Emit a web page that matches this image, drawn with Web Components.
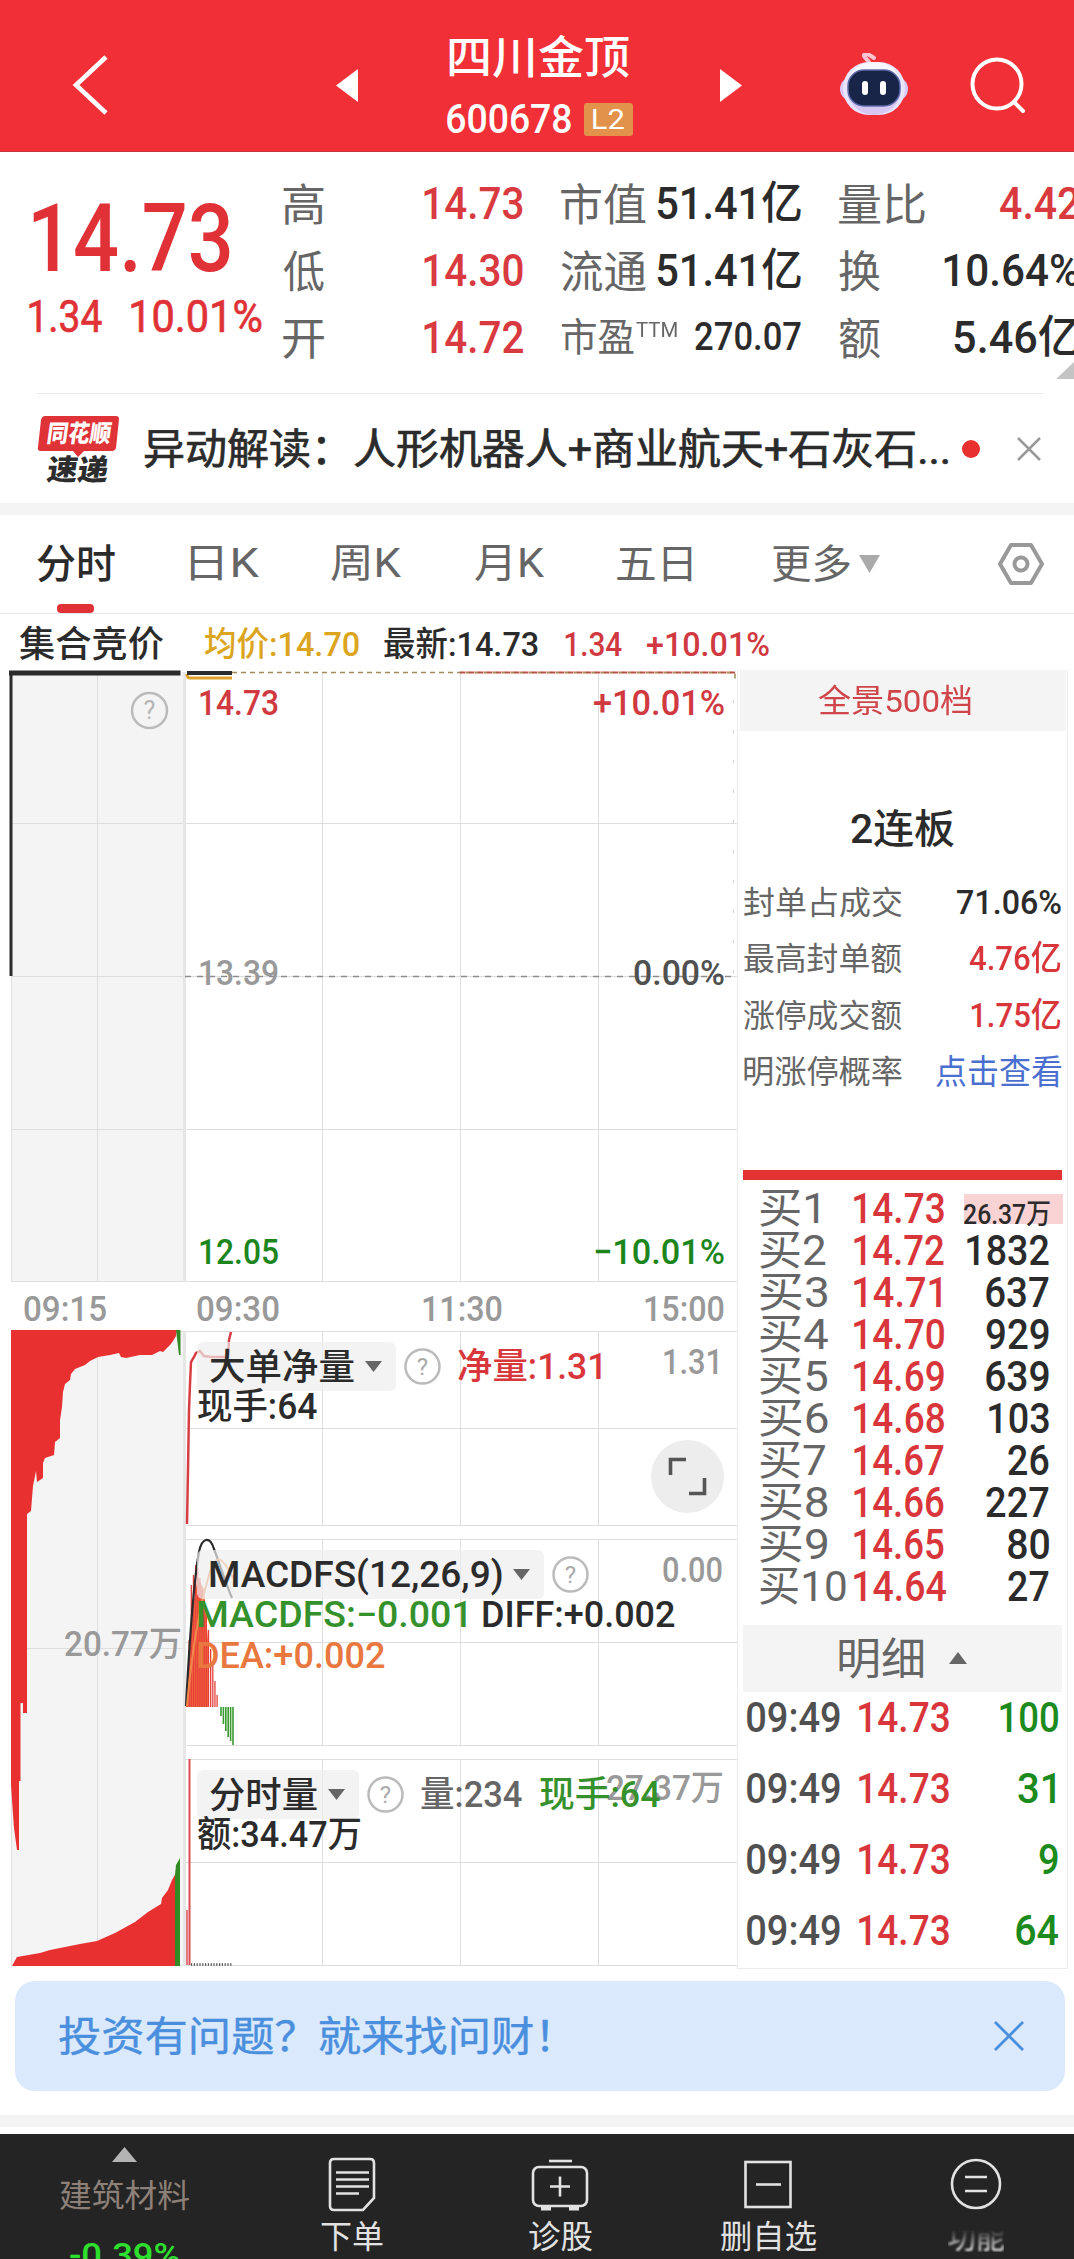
<!DOCTYPE html>
<html lang="zh-CN">
<head>
<meta charset="utf-8">
<title>四川金顶 600678</title>
<style>
  html, body { margin: 0; padding: 0; }
  body {
    width: 1074px;
    height: 2259px;
    overflow: hidden;
    background: #fff;
    color: #2b2b2b;
    font-family: Roboto, "Noto Sans CJK SC", sans-serif;
    font-weight: 500;
  }
</style>
</head>
<body>
<stock-page></stock-page>

<script>
/**
 * Single line of text squeezed to a given width.
 * Usage: <fit-text w="120" s="36">14.73</fit-text>
 */
class FitText extends HTMLElement {
    constructor() {
        super();
        this.attachShadow({ mode: 'open' });
    }

    connectedCallback() {
        const size = Number(this.getAttribute('s'));
        const width = Number(this.getAttribute('w'));
        this.shadowRoot.innerHTML = `
      <style>
        :host { display: block; flex: none; width: ${width}px; height: ${size}px; font-size: ${size}px; line-height: ${size}px; }
        span { display: inline-block; white-space: nowrap; transform-origin: 0 50%; }
      </style>
      <span><slot></slot></span>
    `;
        const cs = getComputedStyle(this);
        const ctx = FitText.ctx;
        ctx.font = `${cs.fontWeight} ${size}px ${cs.fontFamily}`;
        const m = ctx.measureText(this.textContent);
        const scale = width / (m.actualBoundingBoxLeft + m.actualBoundingBoxRight);
        // Han glyphs sit a little higher than the digits
        const drop = /[0-9A-Z]/.test(this.textContent) ? 0 : size * 0.035;
        this.shadowRoot.querySelector('span').style.transform =
            `translate(${m.actualBoundingBoxLeft * scale}px, ${drop}px) scaleX(${scale})`;
    }
}
FitText.ctx = document.createElement('canvas').getContext('2d');
customElements.define('fit-text', FitText);

// Shorthand for the static parts of the page
function define(name, css, html) {
    customElements.define(name, class extends HTMLElement {
        constructor() {
            super();
            this.attachShadow({ mode: 'open' });
        }

        connectedCallback() {
            this.shadowRoot.innerHTML = `<style>:host { display: block; box-sizing: border-box; } svg { display: block; flex: none; } ${css}</style>${html}`;
        }
    });
}

const t = (text, w, s, cls = '') => `<fit-text class="${cls}" w="${w}" s="${s}">${text}</fit-text>`;

/* ---------- header ---------- */
define('stock-header', `
  :host { height: 152px; padding-top: 18px; background: #f12f37; color: #fff; border-bottom: 1px solid #c9343c; }
  .bar { display: flex; align-items: center; height: 134px; }
  .title { width: 186px; height: 102px; margin: 0 88px 0 89px; }
  .title > fit-text { margin-left: 2px; }
  .code { display: flex; align-items: center; height: 33px; margin-top: 24px; }
  .badge { display: flex; align-items: center; justify-content: center; width: 49px; height: 33px; margin-left: 13px; border-radius: 3px; background: #e2924a; font-weight: 400; }
`, `
  <div class="bar">
    <svg width="36" height="60" style="margin-left:72px" fill="none" stroke="#fff" stroke-width="4.6"><path d="M34 2 4 30l30 28"/></svg>
    <svg width="22" height="33" style="margin-left:228px" fill="#fff"><path d="M22 0v33L0 16.500z"/></svg>
    <div class="title">
      ${t('四川金顶', 180, 45)}
      <div class="code">${t('600678', 124, 40)}<span class="badge">${t('L2', 31, 28)}</span></div>
    </div>
    <svg width="22" height="33" style="margin-left:-1px" fill="#fff"><path d="M0 0v33l22-16.500z"/></svg>
    <svg width="70" height="64" viewBox="0 0 70 64" style="margin-left:97px">
      <path d="M31 11C28 5 24 4 25 2c2-3 7 1 10 3" fill="none" stroke="#ffc4d2" stroke-width="4" stroke-linecap="round"/>
      <rect x="1" y="24" width="68" height="24" rx="12" fill="#d9c9fb"/>
      <rect x="4" y="9" width="62" height="53" rx="26" fill="#e9e4ff"/>
      <path d="M8 42c6 14 16 20 27 20s22-6 27-20z" fill="#d6c8f3"/>
      <path d="M10 24c4-10 14-15 25-15s21 5 25 15z" fill="#f8f6ff"/>
      <rect x="9" y="17" width="52" height="36" rx="16" fill="#182548" stroke="#5c68a8" stroke-width="1.500"/>
      <rect x="23" y="28" width="6" height="14" rx="3" fill="#fff"/>
      <rect x="41" y="28" width="6" height="14" rx="3" fill="#fff"/>
    </svg>
    <svg width="58" height="58" style="margin-left:60px" fill="none" stroke="#fff" stroke-width="4" stroke-linecap="round"><circle cx="28" cy="28" r="24.500"/><path d="m45 46 9 9"/></svg>
  </div>
`);

/* ---------- price and key figures ---------- */
const stat = (label, lw, value, vw, cls, s = 45) =>
    `<div class="row">${t(label, lw, 44, 'label')}${t(value, vw, s, cls)}</div>`;

define('quote-summary', `
  :host { position: relative; height: 242px; overflow: hidden; }
  .wrap { display: grid; grid-template-columns: 283px 240px 240px 240px; }
  .price { padding-top: 40px; color: #e03236; }
  .price > fit-text { margin-left: 33px; }
  .change { display: flex; gap: 29px; margin: 8px 0 0 29px; font-weight: 400; -webkit-text-stroke: .7px; }
  .wrap { grid-template-columns: 283px 240px 278px 278px; }
  .col { padding-top: 18px; }
  .col + .col { padding-left: 38px; }
  .row { display: flex; align-items: center; justify-content: space-between; height: 67px; }
  .label { color: #666; font-weight: 400; }
  .pe { display: flex; align-items: center; }
  .pe fit-text + fit-text { margin: -14px 0 0 2px; }
  .red { color: #d93a40; }
  .line { height: 1px; margin: 22px 31px 0 37px; background: #ebebeb; }
  .corner { position: absolute; right: 0; bottom: 15px; }
`, `
  <div class="wrap">
    <div class="price">
      ${t('14.73', 197, 94)}
      <div class="change">${t('1.34', 73, 45)}${t('10.01%', 130, 45)}</div>
    </div>
    <div class="col">
      ${stat('高', 41, '14.73', 99, 'red')}
      ${stat('低', 41, '14.30', 99, 'red')}
      ${stat('开', 41, '14.72', 99, 'red')}
    </div>
    <div class="col">
      ${stat('市值', 85, '51.41亿', 144, '')}
      ${stat('流通', 85, '51.41亿', 144, '')}
      <div class="row"><span class="pe">${t('市盈', 73, 39, 'label')}${t('TTM', 41, 21, 'label')}</span>${t('270.07', 106, 39)}</div>
    </div>
    <div class="col">
      ${stat('量比', 86, '4.42', 79, 'red')}
      ${stat('换', 41, '10.64%', 135, '')}
      ${stat('额', 41, '5.46亿', 125, '')}
    </div>
  </div>
  <div class="line"></div>
  <svg class="corner" width="18" height="17" fill="#c4c4c4"><path d="M18 0v17H0z"/></svg>
`);

/* ---------- news strip ---------- */
define('news-strip', `
  :host { display: flex; align-items: center; height: 109px; }
  svg.logo { margin: 0 26px 0 37px; }
  .text { display: flex; font-weight: 400; -webkit-text-stroke: .7px; }
  .dot { width: 18px; height: 18px; margin: 0 46px 0 14px; border-radius: 50%; background: #e8302e; }
`, `
  <svg class="logo" width="82" height="68" viewBox="0 0 82 68" font-family="'Noto Sans CJK SC'" font-weight="900">
    <path d="M8 1h71q3 0 3 3l-3 29q-1 3-4 3H47l-6 6-5-6H4q-4 0-3-4L4 5q1-4 4-4z" fill="#e03338"/>
    <text transform="translate(9 27) skewX(-8)" font-size="24" textLength="64" lengthAdjust="spacingAndGlyphs" fill="#fff">同花顺</text>
    <text transform="translate(9 65) skewX(-8)" font-size="29" textLength="61" lengthAdjust="spacingAndGlyphs" fill="#2d2d2d">速递</text>
  </svg>
  <span class="text">${t('异动解读：', 180, 42)}<span style="width:29px"></span>${t('人形机器人+商业航天+石灰石...', 594, 42)}</span>
  <span class="dot"></span>
  <svg style="margin-left:-9px" width="24" height="24" stroke="#999" stroke-width="2.500"><path d="m1 1 22 22M23 1 1 23"/></svg>
`);

/* ---------- period tabs ---------- */
define('period-tabs', `
  :host { position: relative; display: flex; align-items: center; height: 111px; border-top: 12px solid #f4f4f4; border-bottom: 1px solid #e6e6e6; color: #666; font-weight: 400; padding-left: 37px; }
  .on { color: #2b2b2b; font-weight: 500; }
  .mark { position: absolute; left: 57px; bottom: 0; width: 37px; height: 9px; border-radius: 4px; background: #e03236; }
`, `
  ${t('分时', 78, 40, 'on')}
  <span style="width:76px"></span>${t('日K', 69, 40)}
  <span style="width:71px"></span>${t('周K', 71, 40)}
  <span style="width:73px"></span>${t('月K', 70, 40)}
  <span style="width:72px"></span>${t('五日', 75, 40)}
  <span style="width:80px"></span>${t('更多', 78, 40)}
  <svg style="margin-left:9px" width="21" height="18" fill="#aaa"><path d="M0 0h21L10.500 18z"/></svg>
  <svg style="margin-left:118px" width="46" height="44" fill="none" stroke="#999" stroke-width="4" stroke-linejoin="round"><path d="M13 3h20l11 19-11 19H13L2 22z"/><circle cx="23" cy="22" r="6.500"/></svg>
  <span class="mark"></span>
`);

define('price-line', `
  :host { display: flex; align-items: center; height: 56px; padding: 4px 0 0 19px; box-sizing: border-box; }
  .gold { color: #dba520; }
  .red { color: #d0393f; }
`, `
  ${t('集合竞价', 145, 36)}
  <span style="width:41px"></span>${t('均价:14.70', 154, 34, 'gold')}
  <span style="width:25px"></span>${t('最新:14.73', 154, 34)}
  <span style="width:27px"></span>${t('1.34', 57, 34, 'red')}
  <span style="width:25px"></span>${t('+10.01%', 122, 34, 'red')}
`);

/* ---------- charts ---------- */
const help = (x = 0) => `<svg width="37" height="37" style="margin-left:${x}px"><circle cx="18.500" cy="18.500" r="17" fill="none" stroke="#bbb" stroke-width="2.500"/><text x="18.500" y="27" font-size="24" font-weight="400" text-anchor="middle" fill="#aaa">?</text></svg>`;

function hist() {
    // top edge of the MACD histogram, one value for each minute
    const tops = [1690, 1640, 1585, 1575, 1565, 1568, 1578, 1590, 1600, 1614, 1630, 1649, 1665, 1681, 1695];
    const lows = [1716, 1724, 1731, 1737, 1741, 1745];
    let out = '';
    tops.forEach((y, i) => {
        out += `<path d="M${187 + i * 2.15} 1707V${y}" stroke="#e5403c" stroke-width="1.300"/>`;
    });
    lows.forEach((y, i) => {
        out += `<path d="M${221 + i * 2.4} 1707V${y}" stroke="#3a9a30" stroke-width="1.600"/>`;
    });
    return out;
}

function grid() {
    let d = '';
    [823.5, 976.5, 1129.5, 1281.5].forEach(y => { d += `M11 ${y}H737`; });
    [1331.5, 1428.5, 1525.5, 1539.5, 1642.5, 1745.5, 1759.5, 1862.5, 1965.5].forEach(y => { d += `M185 ${y}H737`; });
    d += 'M11 1331.500H185M11 1648.500H185M11 1965.500H185';
    [[672, 1282], [1331, 1526], [1539, 1746], [1759, 1966]].forEach(([a, b]) => {
        [322.5, 460.5, 598.5].forEach(x => { d += `M${x} ${a}V${b}`; });
    });
    d += 'M97.500 672V1282M97.500 1331V1966M11.500 976V1282M11.500 1780V1966';
    return d;
}

const axis = (x, y, text, len, color, anchor = 'start') =>
    `<text x="${x}" y="${y}" textLength="${len}" lengthAdjust="spacingAndGlyphs" text-anchor="${anchor}" fill="${color}">${text}</text>`;

define('trend-chart', `
  :host { display: grid; width: 737px; height: 1299px; }
  :host > * { grid-area: 1 / 1; }
  .legends { padding: 672px 0 0 197px; }
`, `
  <svg width="737" height="1299" viewBox="0 670 737 1299" font-size="35.500">
    <path d="M11 672h172v610H11zM11 1331h172v635H11z" fill="#f4f4f4"/>
    <path d="${grid()}" stroke="#dedede" fill="none"/>
    <path d="M184.500 672V1282M184.500 1331V1966" stroke="#e6e6e6" stroke-width="3"/>
    <path d="M460 672.500H735" stroke="#f6b4ae" stroke-width="2.500"/>
    <path d="M232 672.500H735V680" stroke="#a08c58" stroke-width="1.500" stroke-dasharray="5 4" fill="none"/>
    <path d="M460 672.500H735" stroke="#b4514c" stroke-width="1.500" stroke-dasharray="5 4"/>
    <path d="M733.500 700V975" stroke="#d2d2d2" stroke-dasharray="3 27"/>
    <path d="M185 976.500H737" stroke="#8c8c8c" stroke-width="1.600" stroke-dasharray="6 6"/>
    <path d="M9 673H180.500" stroke="#2b2b2b" stroke-width="5"/>
    <path d="M11 672V976" stroke="#2b2b2b" stroke-width="3"/>
    <path d="M232 678H190q-3 0-3-4" stroke="#dfa32c" stroke-width="3" fill="none"/>
    <path d="M187 673H232" stroke="#2b2b2b" stroke-width="4"/>
    <circle cx="149.500" cy="710.500" r="17.500" fill="none" stroke="#bbb" stroke-width="2.500"/>
    <text x="149.500" y="719" font-size="25" font-weight="400" text-anchor="middle" fill="#b5b5b5">?</text>

    ${axis(198, 715, '14.73', 81, '#d0393f')}
    ${axis(198, 985, '13.39', 81, '#999')}
    ${axis(198, 1264, '12.05', 81, '#1c861c')}
    ${axis(725, 715, '+10.01%', 132, '#d0393f', 'end')}
    ${axis(725, 985, '0.00%', 92, '#505050', 'end')}
    ${axis(725, 1264, '−10.01%', 132, '#1c861c', 'end')}
    ${axis(23, 1321, '09:15', 84, '#999')}
    ${axis(196, 1321, '09:30', 84, '#999')}
    ${axis(503, 1321, '11:30', 82, '#999', 'end')}
    ${axis(725, 1321, '15:00', 82, '#999', 'end')}

    <path d="M11 1330H177L176 1336 173 1341 170 1345 166 1349 163 1352 160 1351 152 1355 140 1355 126 1358 121 1357 119 1353 110 1355 98 1357 90 1361 85 1365 75 1369 71 1374 70 1380 65 1384 63 1392 62 1407 60 1420 60 1438 55 1442 54 1455 45 1458 43 1463 43 1478 37 1482 36 1471 33 1486 32 1498 31 1511 27 1514V1713H23V1703H20.500V1781H19V1850L17 1850 14 1828 12 1800 11 1785Z" fill="#e83030"/>
    <path d="M176 1330h4.500v25h-1.500z" fill="#328a24"/>
    <path d="M12 1966 17 1957 40 1953 50 1950 80 1944 97 1941 115 1933 135 1922 148 1912 161 1904 162 1898 168 1890 172 1880 176 1873V1966Z" fill="#e83030"/>
    <path d="M175 1966V1875L176 1865 180 1858V1966Z" fill="#328a24"/>
    ${axis(182, 1656, '20.77万', 118, '#999', 'end')}

    <path d="M187 1524 188 1470 189 1410 190 1384 191 1362 194 1357 196 1353 200 1351 204 1356 212 1357H228L229 1340 231 1332" fill="none" stroke="#d73e44" stroke-width="2.500"/>
    <path d="M186 1707 190 1640 194 1600 198 1577 204 1590 208 1640V1707Z" fill="#f2663a"/>
    ${hist()}
    <path d="M186 1706C189 1650 193 1585 199 1552 202 1537 210 1536 214 1549 219 1562 226 1584 232 1598" fill="none" stroke="#2b2b2b" stroke-width="2.200"/>
    <path d="M187 1706C192 1650 200 1605 209 1575 216 1552 222 1556 233 1578" fill="none" stroke="#f08a4c" stroke-width="2"/>
    <path d="M189.500 1759V1965" stroke="#dc4a52" stroke-width="2"/>
    <path d="M187 1910V1965" stroke="#dc4a52" stroke-width="1.500"/>
    <path d="M191 1964.500H233" stroke="#4c4c4c" stroke-width="2.500" stroke-dasharray="1.200 1.600"/>
    ${axis(723, 1374, '1.31', 61, '#999', 'end')}
    ${axis(723, 1582, '0.00', 61, '#999', 'end')}
    ${axis(724, 1800, '27.37万', 118, '#999', 'end')}
    <circle cx="687.500" cy="1476.500" r="36.500" fill="#ededed"/>
    <path d="M686 1459.500H670.500V1475M689 1493.500H704.500V1478" fill="none" stroke="#555" stroke-width="3.600"/>
  </svg>
  <div class="legends"><slot></slot></div>
`);

/**
 * Chip with the indicator's name, its current values beside it and below.
 * Slots: name, (default), more
 */
define('indicator-legend', `
  :host { width: 540px; }
  .top { display: flex; align-items: center; height: 49px; }
  .chip { display: flex; align-items: center; justify-content: space-between; height: 49px; padding: 0 14px 0 13px; border-radius: 6px; background: rgba(238, 238, 238, .7); box-sizing: border-box; gap: 11px; }
  .help { margin: 0 17px 0 8px; }
  .more { margin-top: -5px; }
`, `
  <div class="top">
    <span class="chip"><slot name="name"></slot><svg width="17" height="11" fill="#666"><path d="M0 0h17L8.500 11z"/></svg></span>
    <span class="help">${help()}</span>
    <slot></slot>
  </div>
  <div class="more"><slot name="more"></slot></div>
`);

/* ---------- order book ---------- */
const bids = [
    ['买1', 58, '14.73', 90, '26.37万', 86],
    ['买2', 66, '14.72', 90, '1832', 82],
    ['买3', 67, '14.71', 87, '637', 63],
    ['买4', 68, '14.70', 90, '929', 63],
    ['买5', 67, '14.69', 90, '639', 63],
    ['买6', 68, '14.68', 90, '103', 60],
    ['买7', 65, '14.67', 90, '26', 41],
    ['买8', 68, '14.66', 90, '227', 63],
    ['买9', 67, '14.65', 90, '80', 41],
    ['买10', 86, '14.64', 92, '27', 41]
].map(([n, nw, p, pw, q, qw], i) => `
    <div class="bid">${t(n, nw, 42, 'grey')}${t(p, pw, 42, 'red')}<span class="qty ${i ? '' : 'first'}">${t(q, qw, i ? 42 : 28)}</span></div>`).join('');

const trades = [['100', 58, 0], ['31', 37, 3], ['9', 19, 0], ['64', 42, 0]].map(([q, w, r]) => `
    <div class="trade">${t('09:49', 93, 42, 'time')}${t('14.73', 90, 42, 'red')}<span class="qty" style="padding-right:${r}px">${t(q, w, 42)}</span></div>`).join('');

const seal = (label, value, w, cls) => `<div class="seal">${t(label, 158, 32, 'grey')}${t(value, w, 34, cls)}</div>`;

define('order-book', `
  :host { width: 331px; height: 1299px; padding: 0 5px 0 5px; border: 1px solid #ececec; border-top: 0; }
  .depth { display: flex; align-items: center; justify-content: center; height: 61px; margin: 0 -4px 0 -3px; padding-right: 18px; background: #f4f4f4; color: #d0454a; font-weight: 400; }
  .streak { display: flex; justify-content: center; padding: 79px 0 24px; }
  .seal { display: flex; align-items: center; justify-content: space-between; height: 56.3px; padding: 0 1px 0 1px; }
  .grey { color: #666; font-weight: 400; }
  .red { color: #d8363b; }
  .time { color: #505050; }
  .blue { color: #4a6fcf; font-weight: 400; }
  .ratio { height: 10px; margin: 71px 0 7.500px; background: #e23232; }
  .bid { display: grid; grid-template-columns: 94px 95px 1fr; align-items: center; height: 42px; padding-left: 17px; }
  .bid > fit-text, .bid .qty { position: relative; top: .5px; }
  .qty { display: flex; align-items: center; justify-content: flex-end; height: 31px; }
  .bid .qty { padding-right: 13px; }
  .first { margin-left: 15px; background: #f9d3d4; align-items: flex-end; height: 30px; }
  .first fit-text { margin: 0 0 -5px; }
  .detail { display: flex; align-items: center; justify-content: center; height: 67px; margin-top: 17px; gap: 26px; background: #f4f4f4; }
  .trades { margin-top: -9px; }
  .trade { display: grid; grid-template-columns: 112px 90px 1fr; align-items: center; height: 71px; padding: 0 4px; color: #1c8a1c; }
`, `
  <div class="depth">${t('全景500档', 153, 32)}</div>
  <div class="streak">${t('2连板', 103, 40)}</div>
  ${seal('封单占成交', '71.06%', 104, '')}
  ${seal('最高封单额', '4.76亿', 92, 'red')}
  ${seal('涨停成交额', '1.75亿', 90, 'red')}
  ${seal('明涨停概率', '点击查看', 125, 'blue')}
  <div class="ratio"></div>
  ${bids}
  <div class="detail">${t('明细', 84, 44, 'grey')}<svg width="18" height="12" fill="#666"><path d="M9 0l9 12H0z"/></svg></div>
  <div class="trades">${trades}</div>
`);

/* ---------- banner ---------- */
define('ask-banner', `
  :host { display: flex; align-items: center; justify-content: space-between; height: 110px; margin: 12px 9px 24px 15px; padding: 0 41px 0 44px; border-radius: 20px; background: #dbe9fc; color: #4a8fdd; }
  fit-text { font-weight: 400; -webkit-text-stroke: .4px; }
`, `
  ${t('投资有问题？就来找问财！', 489, 41)}
  <svg width="30" height="30" stroke="#4a8fdd" stroke-width="2.800"><path d="m1 1 28 28M29 1 1 29"/></svg>
`);

/* ---------- bottom bar ---------- */
define('bottom-nav', `
  :host { height: 144px; border-top: 12px solid #f4f4f4; overflow: hidden; color: #e2e2e2; font-weight: 400; }
  .bar { display: grid; grid-template-columns: 248px repeat(4, 208px); height: 125px; margin-top: 7px; background: #242424; }
  .item { display: flex; flex-direction: column; align-items: center; padding-top: 22px; }
  .item svg { margin-bottom: 8px; }
  .sector { padding-top: 13px; color: #8d8078; }
  .sector svg { margin-bottom: 17px; }
  .down { margin-top: 28px; color: #2ee02e; font-weight: 500; }
  .wiped { -webkit-mask-image: linear-gradient(transparent 30%, rgba(0,0,0,.55) 60%, #000 90%); filter: blur(.8px); }
`, `
  <div class="bar">
    <div class="item sector">
      <svg width="25" height="15" fill="#b4b4b4"><path d="M12.500 0 25 15H0z"/></svg>
      ${t('建筑材料', 129, 32)}
      ${t('-0.39%', 109, 33, 'down')}
    </div>
    <div class="item">
      <svg width="50" height="56" fill="none" stroke="#e2e2e2" stroke-width="2.600"><path d="M7 3h36q4 0 4 4v35L36 54H7q-4 0-4-4V7q0-4 4-4zM9 16.500h33M9 23.500h33M9 30.500h33M9 37.500h23"/></svg>
      ${t('下单', 62, 32)}
    </div>
    <div class="item">
      <svg width="60" height="56" fill="none" stroke="#e2e2e2" stroke-width="2.600"><path d="M19 5h23"/><rect x="3" y="11" width="54" height="39" rx="6"/><path d="M30 20.500v20M20 30.500h20"/><path d="M11 52.500h10M39 52.500h10" stroke-width="4"/></svg>
      ${t('诊股', 63, 32)}
    </div>
    <div class="item">
      <svg width="50" height="56" fill="none" stroke="#e2e2e2" stroke-width="2.600"><rect x="2.500" y="6" width="45" height="45"/><path d="M13 28.500h25"/></svg>
      ${t('删自选', 95, 32)}
    </div>
    <div class="item">
      <svg width="54" height="56" fill="none" stroke="#e2e2e2" stroke-width="2.600"><circle cx="27" cy="28" r="24"/><path d="M16 21h22M16 35h22"/></svg>
      <div class="wiped">${t('功能', 56, 32)}</div>
    </div>
  </div>
`);

/* ---------- page ---------- */
define('stock-page', `
  :host { width: 1074px; height: 2259px; overflow: hidden; }
  .charts { display: flex; }
  .l1 { height: 208px; }
  .l2 { height: 220px; }
  .line { display: flex; align-items: center; height: 41px; padding-left: 1px; }
  .red { color: #d8363b; }
  .green { color: #35912b; }
  .orange { color: #e87840; }
  .grey { color: #666; }
`, `
  <stock-header></stock-header>
  <quote-summary></quote-summary>
  <news-strip></news-strip>
  <period-tabs></period-tabs>
  <price-line></price-line>
  <div class="charts">
    <trend-chart>
      <indicator-legend class="l1">
        <fit-text slot="name" w="144" s="36">大单净量</fit-text>
        ${t('净量:1.31', 143, 36, 'red')}
        <div slot="more" class="line">${t('现手:64', 119, 36)}</div>
      </indicator-legend>
      <indicator-legend class="l2">
        <fit-text slot="name" w="292" s="36">MACDFS(12,26,9)</fit-text>
        <div slot="more" class="line">${t('MACDFS:−0.001', 268, 36, 'green')}<span style="width:17px"></span>${t('DIFF:+0.002', 192, 36)}</div>
        <div slot="more" class="line orange">${t('DEA:+0.002', 187, 36)}</div>
      </indicator-legend>
      <indicator-legend>
        <fit-text slot="name" w="107" s="36">分时量</fit-text>
        ${t('量:234', 101, 36, 'grey')}<span style="width:18px"></span>${t('现手:64', 120, 36, 'green')}
        <div slot="more" class="line">${t('额:34.47万', 162, 36)}</div>
      </indicator-legend>
    </trend-chart>
    <order-book></order-book>
  </div>
  <ask-banner></ask-banner>
  <bottom-nav></bottom-nav>
`);
</script>
</body>
</html>
